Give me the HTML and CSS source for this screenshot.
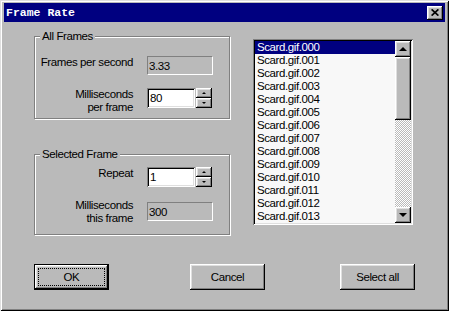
FILE: index.html
```html
<!DOCTYPE html>
<html lang="en">
<head>
    <meta charset="UTF-8">
    <title>Frame Rate</title>
    <link rel="stylesheet" href="styles.css">
</head>
<body>
    <div class="window">
        <div class="titlebar">
            <span class="title">Frame Rate</span>
            <button class="close-btn" title="Close">
                <svg width="8" height="7" viewBox="0 0 8 7"><path d="M0.6 0.4 L7.4 6.6 M7.4 0.4 L0.6 6.6" stroke="#000" stroke-width="1.7"/></svg>
            </button>
        </div>

        <div class="client">
            <div class="main">
                <div class="groups">
                    <!-- All Frames -->
                    <div class="group group-all">
                        <span class="legend">All Frames</span>
                        <label class="label">Frames per second</label>
                        <input class="field" type="text" value="3.33" readonly>
                        <label class="label">Milliseconds<br>per frame</label>
                        <div class="spinbox">
                            <input class="edit" type="text" value="80">
                            <div class="spin">
                                <div class="spin-btn"><i class="arrow-up small"></i></div>
                                <div class="spin-btn"><i class="arrow-down small"></i></div>
                            </div>
                        </div>
                    </div>

                    <!-- Selected Frame -->
                    <div class="group group-sel">
                        <span class="legend">Selected Frame</span>
                        <label class="label">Repeat</label>
                        <div class="spinbox">
                            <input class="edit" type="text" value="1">
                            <div class="spin">
                                <div class="spin-btn"><i class="arrow-up small"></i></div>
                                <div class="spin-btn"><i class="arrow-down small"></i></div>
                            </div>
                        </div>
                        <label class="label raised-label">Milliseconds<br>this frame</label>
                        <input class="field" type="text" value="300" readonly>
                    </div>
                </div>

                <div class="listbox">
                    <ul class="items">
                        <li class="selected">Scard.gif.000</li>
                        <li>Scard.gif.001</li>
                        <li>Scard.gif.002</li>
                        <li>Scard.gif.003</li>
                        <li>Scard.gif.004</li>
                        <li>Scard.gif.005</li>
                        <li>Scard.gif.006</li>
                        <li>Scard.gif.007</li>
                        <li>Scard.gif.008</li>
                        <li>Scard.gif.009</li>
                        <li>Scard.gif.010</li>
                        <li>Scard.gif.011</li>
                        <li>Scard.gif.012</li>
                        <li>Scard.gif.013</li>
                    </ul>
                    <div class="vscroll">
                        <div class="sb-btn"><i class="arrow-up"></i></div>
                        <div class="thumb"></div>
                        <div class="track"></div>
                        <div class="sb-btn"><i class="arrow-down"></i></div>
                    </div>
                </div>
            </div>

            <div class="actions">
                <button class="btn btn-default">OK</button>
                <button class="btn btn-cancel">Cancel</button>
                <button class="btn btn-all">Select all</button>
            </div>
        </div>
    </div>
</body>
</html>
```

FILE: styles.css
```css
body {
    margin: 0;
    font-family: "Liberation Sans", Arial, sans-serif;
    font-size: 11.5px;
    letter-spacing: -0.4px;
    color: #000;
}

/* window frame */
.window {
    box-sizing: border-box;
    width: 449px;
    height: 311px;
    padding: 3px 4px 4px;
    background: #bababa;
    box-shadow: inset 1px 1px #dfdfdf, inset -1px -1px #000,
                inset 2px 2px #fff, inset -2px -2px #808080;
}
.titlebar {
    display: flex;
    align-items: center;
    justify-content: space-between;
    height: 19px;
    padding-left: 2px;
    background: #000080;
    color: #fff;
}
.title {
    font-family: "Liberation Mono", monospace;
    font-weight: bold;
    font-size: 11.5px;
    letter-spacing: 0;
}
.close-btn {
    display: flex;
    align-items: center;
    justify-content: center;
    width: 16px;
    height: 14px;
    margin-right: 2px;
    padding: 0;
    border: 0;
    background: #bababa;
    box-shadow: inset -1px -1px #000, inset 1px 1px #fff,
                inset -2px -2px #808080, inset 2px 2px #dfdfdf;
}

/* client area */
.client {
    padding: 14px 0 0 30px;
}
.main {
    display: flex;
    align-items: flex-start;
}
.groups {
    display: flex;
    flex-direction: column;
    gap: 35px;
    width: 196px;
}
.group {
    position: relative;
    display: grid;
    grid-template-columns: 98px 66px;
    column-gap: 14px;
    align-items: start;
    border: 1px solid #808080;
    box-shadow: inset 1px 1px #fff, 1px 1px #fff;
}
.group-all {
    padding: 19px 0 4px;
    row-gap: 13px;
}
.group-sel {
    padding: 12px 0 9px;
    row-gap: 15px;
}
.legend {
    position: absolute;
    top: -7px;
    left: 5px;
    padding: 0 2px;
    line-height: 13px;
    background: #bababa;
}
.label {
    text-align: right;
    line-height: 13px;
}
.raised-label {
    margin-top: -3px;
}

/* fields */
.field, .edit {
    box-sizing: border-box;
    margin: 0;
    font: inherit;
    letter-spacing: inherit;
    color: #000;
    outline: none;
}
.field {
    width: 66px;
    height: 19px;
    padding: 0 1px;
    border: 1px solid;
    border-color: #808080 #fff #fff #808080;
    background: #bababa;
}
.spinbox {
    display: flex;
    gap: 1px;
}
.edit {
    width: 48px;
    height: 20px;
    padding: 0 3px;
    border: 0;
    background: #fff;
    box-shadow: inset 1px 1px #808080, inset -1px -1px #fff,
                inset 2px 2px #000, inset -2px -2px #dfdfdf;
}
.spin {
    display: flex;
    flex-direction: column;
    width: 16px;
    height: 20px;
}
.spin-btn, .sb-btn, .thumb {
    background: #bababa;
    box-shadow: inset -1px -1px #000, inset 1px 1px #fff,
                inset -2px -2px #808080, inset 2px 2px #dfdfdf;
}
.spin-btn {
    flex: 1;
    display: flex;
    align-items: center;
    justify-content: center;
}

/* arrows */
.arrow-up, .arrow-down {
    width: 0;
    height: 0;
    border-left: 4px solid transparent;
    border-right: 4px solid transparent;
}
.arrow-up { border-bottom: 4px solid #000; }
.arrow-down { border-top: 4px solid #000; }
.arrow-up.small, .arrow-down.small {
    border-left-width: 2px;
    border-right-width: 2px;
}
.arrow-up.small { border-bottom-width: 2px; }
.arrow-down.small { border-top-width: 2px; }

/* list box */
.listbox {
    box-sizing: border-box;
    display: flex;
    width: 160px;
    height: 186px;
    margin: 3px 0 0 23px;
    padding: 2px;
    background: #f8f8f8;
    box-shadow: inset 1px 1px #808080, inset -1px -1px #fff,
                inset 2px 2px #000, inset -2px -2px #dfdfdf;
}
.items {
    flex: 1;
    margin: 0;
    padding: 0;
    list-style: none;
    overflow: hidden;
}
.items li {
    padding-left: 2px;
    line-height: 13px;
    white-space: nowrap;
}
.items li.selected {
    background: #000080;
    color: #fff;
}
.vscroll {
    display: flex;
    flex-direction: column;
    width: 16px;
}
.sb-btn {
    display: flex;
    align-items: center;
    justify-content: center;
    height: 16px;
}
.thumb {
    height: 63px;
}
.track {
    flex: 1;
    background: repeating-conic-gradient(#fff 0 25%, #bababa 0 50%) 0 0 / 2px 2px;
}

/* buttons */
.actions {
    display: flex;
    margin-top: 29px;
}
.btn {
    position: relative;
    box-sizing: border-box;
    width: 75px;
    height: 26px;
    padding: 0;
    border: 0;
    background: #bababa;
    font: inherit;
    letter-spacing: inherit;
    color: #000;
    box-shadow: inset -1px -1px #000, inset 1px 1px #fff,
                inset -2px -2px #808080, inset 2px 2px #dfdfdf;
}
.btn-default {
    border: 1px solid #000;
}
.btn-default::after {
    content: "";
    position: absolute;
    inset: 3px;
    border: 1px dotted #000;
}
.btn-cancel { margin-left: 81px; }
.btn-all { margin-left: 75px; }
```
